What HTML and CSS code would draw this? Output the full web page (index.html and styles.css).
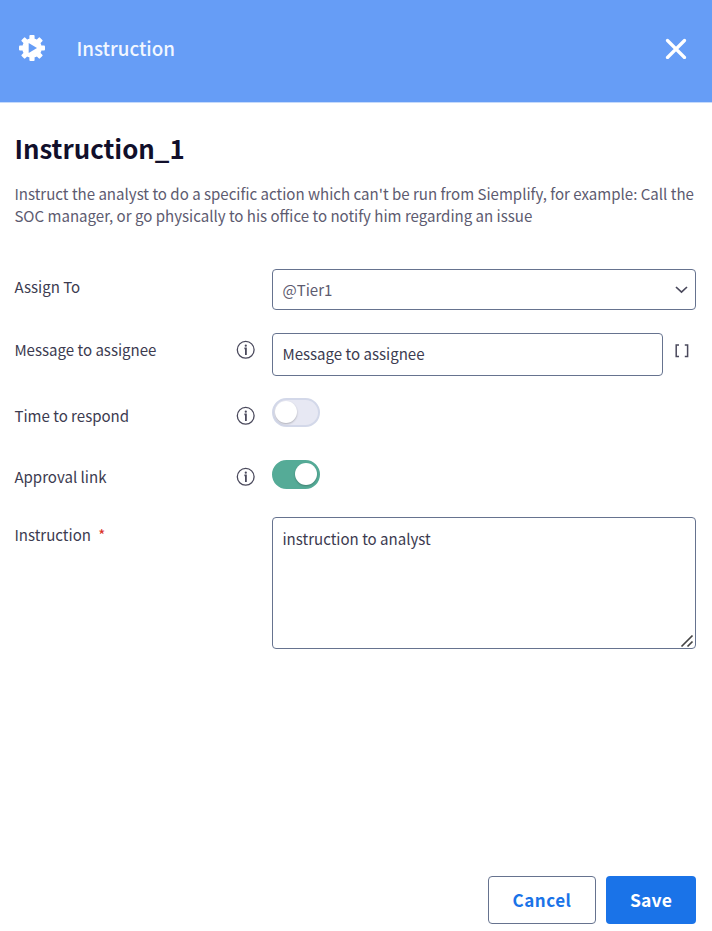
FILE: index.html
```html
<!DOCTYPE html>
<html lang="en">
<head>
    <meta charset="UTF-8">
    <title>Instruction</title>
    <link rel="stylesheet" href="styles.css">
</head>
<body>
    <div class="panel">
        <header class="header">
            <svg class="gear" width="28" height="28" viewBox="-14 -14 28 28">
                <g fill="#fff">
                    <circle r="9.8"/>
                    <g id="teeth">
                        <rect x="-2.6" y="-13" width="5.2" height="26" rx="1"/>
                        <rect x="-13" y="-2.6" width="26" height="5.2" rx="1"/>
                    </g>
                    <use href="#teeth" transform="rotate(45)"/>
                </g>
                <path d="M-3.3 -5 L5 0 L-3.3 5 Z" fill="#669df6"/>
            </svg>
            <span class="header-title">Instruction</span>
            <svg class="close" width="22" height="22" viewBox="0 0 22 22">
                <path d="M2.5 3.5 L19.5 20.5 M19.5 3.5 L2.5 20.5" stroke="#fff" stroke-width="3.2" stroke-linecap="round"/>
            </svg>
        </header>

        <main class="content">
            <h1 class="title">Instruction_1</h1>
            <p class="desc">Instruct the analyst to do a specific action which can't be run from Siemplify, for example: Call the<br>SOC manager, or go physically to his office to notify him regarding an issue</p>

            <div class="row row-assign">
                <label class="label">Assign To</label>
                <div class="field select">
                    <span>@Tier1</span>
                    <svg width="14" height="10" viewBox="0 0 14 10">
                        <path d="M2 2 L7.5 7.2 L13 2" fill="none" stroke="#4a495c" stroke-width="1.7"/>
                    </svg>
                </div>
            </div>

            <div class="row row-message">
                <label class="label">Message to assignee</label>
                <svg class="info" width="20" height="20" viewBox="0 0 20 20">
                    <circle cx="9.7" cy="9.8" r="8.4" fill="none" stroke="#4a495c" stroke-width="1.3"/>
                    <path d="M8.4 8.4 H9.9 V15" fill="none" stroke="#4a495c" stroke-width="1.8"/>
                    <circle cx="9.8" cy="5.7" r="1.1" fill="#4a495c"/>
                </svg>
                <div class="field text">Message to assignee</div>
                <svg class="brackets" width="14" height="14" viewBox="0 0 14 14">
                    <path d="M4 1 H1.2 V12.6 H4 M9.8 1 H12.6 V12.6 H9.8" fill="none" stroke="#4a495c" stroke-width="1.5"/>
                </svg>
            </div>

            <div class="row row-time">
                <label class="label">Time to respond</label>
                <svg class="info" width="20" height="20" viewBox="0 0 20 20">
                    <circle cx="9.7" cy="9.8" r="8.4" fill="none" stroke="#4a495c" stroke-width="1.3"/>
                    <path d="M8.4 8.4 H9.9 V15" fill="none" stroke="#4a495c" stroke-width="1.8"/>
                    <circle cx="9.8" cy="5.7" r="1.1" fill="#4a495c"/>
                </svg>
                <div class="toggle"><i class="knob"></i></div>
            </div>

            <div class="row row-approval">
                <label class="label">Approval link</label>
                <svg class="info" width="20" height="20" viewBox="0 0 20 20">
                    <circle cx="9.7" cy="9.8" r="8.4" fill="none" stroke="#4a495c" stroke-width="1.3"/>
                    <path d="M8.4 8.4 H9.9 V15" fill="none" stroke="#4a495c" stroke-width="1.8"/>
                    <circle cx="9.8" cy="5.7" r="1.1" fill="#4a495c"/>
                </svg>
                <div class="toggle on"><i class="knob"></i></div>
            </div>

            <div class="row row-instruction">
                <label class="label">Instruction <span class="required">*</span></label>
                <div class="field area">
                    <span>instruction to analyst</span>
                    <svg class="grip" width="14" height="14" viewBox="0 0 14 14">
                        <path d="M1.5 12.5 L12.5 1.5 M7.5 12.5 L12.5 7.5" stroke="#444" stroke-width="1.7"/>
                    </svg>
                </div>
            </div>
        </main>

        <footer class="footer">
            <button class="btn cancel">Cancel</button>
            <button class="btn save">Save</button>
        </footer>
    </div>
</body>
</html>
```
FILE: styles.css
```css
*{
    margin: 0;
    padding: 0;
    box-sizing: border-box;
}
body{
    font-family: "Noto Sans CJK SC", "Noto Sans", sans-serif;
    font-size: 15.05px;
    line-height: 22px;
    color: #3c3b50;
    background: #fff;
}
svg{
    display: block;
    flex: none;
}
.panel{
    height: 931px;
    display: flex;
    flex-direction: column;
}
.header{
    height: 103px;
    padding: 0 25px 6px 18px;
    display: flex;
    align-items: center;
    background: #669df6;
    border-bottom: 1px solid #c5dafb;
}
.header-title{
    margin-left: 30.5px;
    font-size: 18.8px;
    font-weight: 500;
    line-height: 22px;
    color: #f2f7ff;
}
.close{
    margin-left: auto;
}
.content{
    flex: 1;
    padding: 26px 16px 0 14.4px;
}
.title{
    font-size: 25.8px;
    line-height: 38px;
    font-weight: bold;
    color: #110f2b;
}
.desc{
    margin-top: 16px;
    margin-bottom: 42px;
    color: #5d5b70;
    white-space: nowrap;
}
.row{
    display: flex;
    align-items: flex-start;
}
.label{
    width: 221.6px;
    flex: none;
}
.info{
    margin-right: 16px;
}
.field{
    flex: 1;
    padding: 0 9.5px;
    border: 1px solid #66738f;
    border-radius: 4px;
}
.row-assign{
    height: 64px;
}
.row-assign .label{
    width: 257.6px;
    padding-top: 7px;
}
.select{
    height: 41px;
    padding-right: 7px;
    display: flex;
    align-items: center;
    justify-content: space-between;
    color: #5d5b70;
}
.row-message{
    height: 65px;
}
.row-message .label{
    padding-top: 6px;
}
.row-message .info{
    margin-top: 7px;
}
.text{
    height: 43px;
    line-height: 40px;
}
.brackets{
    margin: 11px 7px 0 12px;
}
.row-time{
    height: 62px;
}
.row-time .label{
    padding-top: 7px;
}
.row-time .info{
    margin-top: 8px;
}
.row-approval{
    height: 57px;
}
.row-approval .label{
    padding-top: 6px;
}
.row-approval .info{
    margin-top: 7px;
}
.toggle{
    width: 48px;
    height: 29px;
    padding: 1px;
    display: flex;
    background: #e7e8f3;
    border: 2px solid #d3d8e9;
    border-radius: 15px;
}
.toggle.on{
    justify-content: flex-end;
    background: #55ab97;
    border-color: #55ab97;
}
.knob{
    width: 22px;
    height: 22px;
    border-radius: 50%;
    background: #fff;
    box-shadow: 0 1px 2px rgba(0, 0, 0, 0.25);
}
.row-instruction .label{
    width: 257.6px;
    padding-top: 7px;
}
.required{
    margin-left: 4px;
    color: #d93025;
}
.area{
    height: 132px;
    padding: 10px 1px 0 9.5px;
    display: flex;
    flex-direction: column;
    justify-content: space-between;
}
.grip{
    align-self: flex-end;
}
.footer{
    padding: 0 16px 7px;
    display: flex;
    justify-content: flex-end;
    gap: 10px;
}
.btn{
    height: 48px;
    font-family: inherit;
    font-size: 17.5px;
    font-weight: bold;
    border-radius: 4px;
}
.cancel{
    width: 108px;
    padding-bottom: 2px;
    font-size: 17px;
    letter-spacing: 0.5px;
    color: #1a73e8;
    background: #fff;
    border: 1px solid #66738f;
}
.save{
    width: 90px;
    padding-bottom: 1px;
    letter-spacing: 0.2px;
    color: #fff;
    background: #1a73e8;
    border: none;
}
```
